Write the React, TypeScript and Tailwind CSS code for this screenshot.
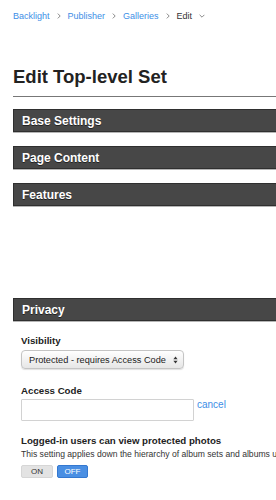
import React from "react";

function ChevRight() {
  return (
    <svg width="4" height="6" viewBox="0 0 4 6" className="shrink-0">
      <path d="M0.8 0.6 L3.2 3 L0.8 5.4" fill="none" stroke="#8a8a8a" strokeWidth="1" />
    </svg>
  );
}

function ChevDown() {
  return (
    <svg width="6" height="4" viewBox="0 0 6 4" className="shrink-0">
      <path d="M0.6 0.8 L3 3.2 L5.4 0.8" fill="none" stroke="#8a8a8a" strokeWidth="1" />
    </svg>
  );
}

function Bar({ title, className = "" }: { title: string; className?: string }) {
  return (
    <div
      className={
        "h-[23px] flex items-center pl-[8px] bg-[#474747] border border-[#2f2f2f] shadow-[0_1px_0_#b5b5b5] " +
        className
      }
    >
      <span className="text-[12px] leading-[14px] font-bold text-white [text-shadow:0_1px_0_#222]">
        {title}
      </span>
    </div>
  );
}

export default function App() {
  return (
    <div className="w-[276px] h-[500px] overflow-hidden bg-white font-['Liberation_Sans',Arial,sans-serif]">
      <div className="w-[640px] pl-[13px]">
        {/* breadcrumb */}
        <div className="pt-[10px] h-[22px] flex items-center gap-[7px] text-[9px] leading-[12px]">
          <span className="text-[#3d8ee6]">Backlight</span>
          <ChevRight />
          <span className="text-[#3d8ee6]">Publisher</span>
          <ChevRight />
          <span className="text-[#3d8ee6]">Galleries</span>
          <ChevRight />
          <span className="text-[#333]">Edit</span>
          <ChevDown />
        </div>

        {/* title */}
        <h1 className="mt-[44px] text-[18.5px] leading-[22px] font-bold text-[#222]">Edit Top-level Set</h1>
        <div className="mt-[8px] h-px bg-[#777]" />

        <Bar title="Base Settings" className="mt-[12px]" />
        <Bar title="Page Content" className="mt-[14px]" />
        <Bar title="Features" className="mt-[14px]" />
        <Bar title="Privacy" className="mt-[92px]" />

        <div className="pl-[8px]">
          <div className="mt-[14px] text-[9.7px] leading-[12px] font-bold text-[#222]">Visibility</div>
          <div className="mt-[3px] w-[163px] h-[19px] flex items-center justify-between pl-[7px] pr-[5px] rounded-[4px] border border-[#c4c4c4] bg-gradient-to-b from-[#ffffff] to-[#e6e6e6] shadow-[0_1px_1px_rgba(0,0,0,0.12)]">
            <span className="text-[9.2px] leading-[12px] text-[#222]">Protected - requires Access Code</span>
            <svg width="5" height="8" viewBox="0 0 5 8">
              <path d="M2.5 0.5 L4.6 3.2 L0.4 3.2 Z" fill="#333" />
              <path d="M2.5 7.5 L4.6 4.8 L0.4 4.8 Z" fill="#333" />
            </svg>
          </div>

          <div className="mt-[16px] text-[9.7px] leading-[12px] font-bold text-[#222]">Access Code</div>
          <div className="mt-[2px] flex items-start">
            <div className="w-[173px] h-[22px] border border-[#d2d2d2] rounded-[1px] bg-white" />
            <span className="ml-[3px] text-[10px] leading-[12px] text-[#3d8ee6]">cancel</span>
          </div>

          <div className="mt-[14px] text-[9.7px] leading-[12px] font-bold text-[#222]">
            Logged-in users can view protected photos
          </div>
          <div className="mt-[2px] text-[8.6px] leading-[11px] text-[#333] whitespace-nowrap">
            This setting applies down the hierarchy of album sets and albums unless overridden
          </div>
          <div className="mt-[5px] flex gap-[4px]">
            <div className="w-[32px] h-[13px] flex items-center justify-center rounded-[2px] bg-[#e3e3e3] border border-[#d6d6d6] text-[8px] leading-[10px] text-[#333]">
              ON
            </div>
            <div className="w-[31px] h-[13px] flex items-center justify-center rounded-[2px] bg-[#4a8fe3] border border-[#3478d0] text-[8px] leading-[10px] text-white">
              OFF
            </div>
          </div>
        </div>
      </div>
    </div>
  );
}
